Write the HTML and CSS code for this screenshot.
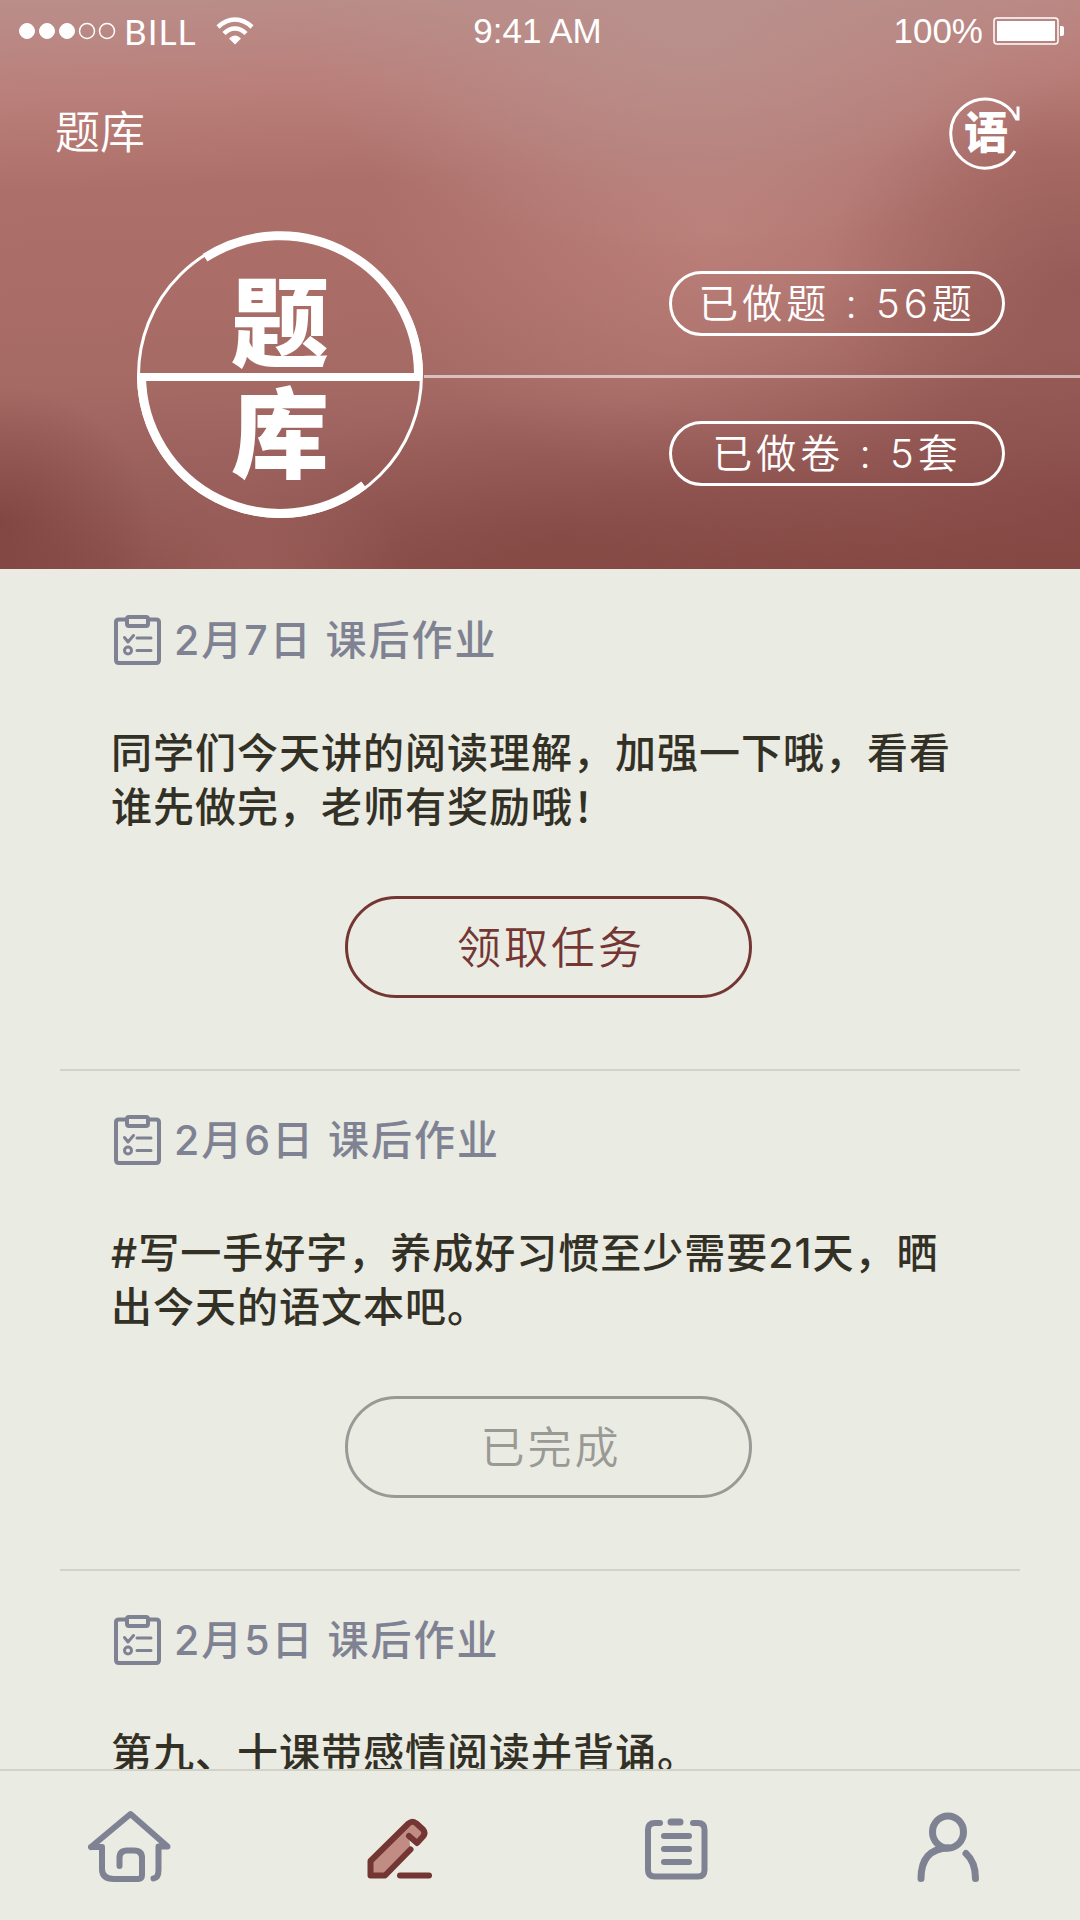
FILE: index.html
```html
<!DOCTYPE html>
<html lang="zh-CN">
<head>
<meta charset="utf-8">
<meta name="viewport" content="width=device-width, initial-scale=1">
<title>题库</title>
<link rel="stylesheet" href="styles.css">
</head>
<body>
<svg class="sprite" aria-hidden="true">
  <symbol id="icon-task" viewBox="0 0 48 50">
    <g fill="none" stroke="currentColor" stroke-linecap="round" stroke-linejoin="round">
      <path stroke-width="4" d="M12 4.500H5Q2 4.500 2 7V45Q2 48 5 48H42Q45 48 45 45V7Q45 4.500 42 4.500H35"/>
      <rect stroke-width="4" x="13" y="2" width="21" height="9" rx="2"/>
      <path stroke-width="3" d="M10.500 22.500L14 27L19.500 20.500M23 23H37M23 35.500H37"/>
      <circle stroke-width="3" cx="14" cy="35.500" r="3.500"/>
    </g>
  </symbol>
</svg>
<header class="hero">
  <div class="status">
    <div class="carrier">
      <svg width="98" height="18" viewBox="0 0 98 18" fill="#fff" stroke="#fff"><circle cx="9" cy="9" r="7.500"/><circle cx="29" cy="9" r="7.500"/><circle cx="49" cy="9" r="7.500"/><g fill="none" stroke-width="1.500"><circle cx="69" cy="9" r="7.500"/><circle cx="89" cy="9" r="7.500"/></g></svg>
      <span class="carrier-name">BILL</span>
      <svg width="38" height="28" viewBox="0 0 38 28" fill="none" stroke="#fff" stroke-width="4.500"><path d="M2 10Q10 2.500 19 2.500T36 10M8 16.500Q13 11.500 19 11.500T30 16.500"/><path fill="#fff" stroke="none" d="M13 21.500Q19 15.500 25 21.500L19 27.500Z"/></svg>
    </div>
    <span class="clock">9:41 AM</span>
    <div class="power">
      <span>100%</span>
      <svg width="72" height="28" viewBox="0 0 72 28" fill="#fff"><rect x="1" y="1" width="64" height="26" rx="3" fill="none" stroke="#fff" stroke-width="1.500"/><rect x="4" y="4" width="58" height="20"/><path d="M67 9h2q2 0 2 2v6q0 2-2 2h-2z"/></svg>
    </div>
  </div>
  <nav class="bar">
    <h1 class="page-title">题库</h1>
    <button class="subject" type="button" aria-label="语文">
      <svg width="74" height="74" viewBox="0 0 74 74"><path d="M69 10.500V23H67.500A34.500 34.500 0 1 0 66 55" fill="none" stroke="#fff" stroke-width="3"/><text class="subject-char" x="37" y="53">语</text></svg>
    </button>
  </nav>
  <div class="summary">
    <svg class="emblem" width="288" height="288" viewBox="0 0 288 288">
      <g fill="none" stroke="#fff">
        <circle cx="144" cy="144" r="141.500" stroke-width="3"/>
        <path stroke-width="9" d="M69 26.800A138.500 138.500 0 0 1 282.500 144M5.500 144A138.500 138.500 0 0 0 228 254"/>
        <path stroke-width="8" d="M4 146H284"/>
      </g>
      <text class="emblem-char" x="144" y="128">题</text>
      <text class="emblem-char" x="144" y="239">库</text>
    </svg>
    <div class="stats">
      <p class="stat">已做题 : 56题</p>
      <hr class="stat-line">
      <p class="stat">已做卷 : 5套</p>
    </div>
  </div>
</header>
<main class="feed">
  <article class="task">
    <h2 class="task-title"><svg class="task-icon" aria-hidden="true"><use href="#icon-task"/></svg>2月7日 课后作业</h2>
    <p class="task-text">同学们今天讲的阅读理解，加强一下哦，看看谁先做完，老师有奖励哦！</p>
    <button class="action" type="button">领取任务</button>
  </article>
  <article class="task">
    <h2 class="task-title"><svg class="task-icon" aria-hidden="true"><use href="#icon-task"/></svg>2月6日 课后作业</h2>
    <p class="task-text">#写一手好字，养成好习惯至少需要21天，晒出今天的语文本吧。</p>
    <button class="action action-done" type="button">已完成</button>
  </article>
  <article class="task">
    <h2 class="task-title"><svg class="task-icon" aria-hidden="true"><use href="#icon-task"/></svg>2月5日 课后作业</h2>
    <p class="task-text">第九、十课带感情阅读并背诵。</p>
  </article>
</main>
<nav class="tabs">
  <a class="tab" href="#home" aria-label="首页"><svg width="84" height="74" viewBox="0 0 84 74"><path d="M3 38H14V60Q14 70 26 70H50Q54 70 54 66V49Q54 41.500 46 41.500H39Q31.500 41.500 31.500 49V57M65.500 69.500Q70.500 69 70.500 61V37.500H79.500L42.500 5L3 38"/></svg></a>
  <a class="tab tab-current" href="#exercises" aria-label="题库"><svg width="84" height="74" viewBox="0 0 84 74"><path d="M48 27L56 34L62 27.500Q65 24 62 20.500L55.500 14.500Q51.500 11 47.500 14.500L9.500 52V66.500H24L49.500 40.500" fill="#c08c84"/><path d="M39 66.500H68"/></svg></a>
  <a class="tab" href="#notes" aria-label="作业"><svg width="84" height="74" viewBox="0 0 84 74"><path d="M27 14H22Q15 14 15 20.500V61Q15 67.500 22 67.500H65Q71.500 67.500 71.500 61V20.500Q71.500 14 65 14H60M31 27H56M31 40H56M31 53H56"/><path stroke-width="7" d="M38 13H47"/></svg></a>
  <a class="tab" href="#profile" aria-label="我的"><svg width="84" height="74" viewBox="0 0 84 74"><g stroke-width="7"><ellipse cx="42" cy="23" rx="15.500" ry="16"/><path d="M42 39C24 39.500 15 50 15 69.500M60 44.500Q69.500 53 69.500 69.500"/></g></svg></a>
</nav>
</body>
</html>
```
FILE: styles.css
```css
* { box-sizing: border-box; }

body {
  margin: 0;
  height: 100vh;
  display: flex;
  flex-direction: column;
  background: #eaebe2;
  color: #333126;
  font-family: Inter, "Noto Sans CJK SC", sans-serif;
  font-size: 41px;
}

h1, h2, p { margin: 0; }
button { font: inherit; background: none; cursor: pointer; }
svg { display: block; flex: none; }
.sprite { position: absolute; width: 0; height: 0; }

/* Header */
.hero {
  flex: none;
  padding-bottom: 50px;
  color: #fff;
  background:
    radial-gradient(ellipse 14% 24% at 0 92%, rgba(118, 58, 54, .6), transparent),
    radial-gradient(ellipse 14% 20% at 24% 100%, rgba(166, 103, 99, .5), transparent),
    radial-gradient(ellipse 32% 24% at 52% 94%, rgba(124, 62, 58, .4), transparent),
    radial-gradient(ellipse 24% 36% at 100% 50%, rgba(140, 82, 78, .6), transparent),
    radial-gradient(ellipse 46% 44% at 100% 88%, rgba(124, 60, 56, .45), transparent),
    radial-gradient(ellipse 36% 40% at 64% 6%, rgba(184, 148, 144, .75), transparent),
    radial-gradient(ellipse 32% 46% at 66% 40%, rgba(196, 136, 130, .65), transparent),
    linear-gradient(178deg, #ba8e8a 0%, #ba7f7a 16%, #ad6f6a 32%, #a66a65 64%, #985e5a 82%, #884c47 100%);
}

.status {
  display: grid;
  grid-template-columns: 1fr auto 1fr;
  align-items: center;
  height: 62px;
  padding: 0 15px 0 18px;
  font-family: "Liberation Sans", Arial, sans-serif;
  font-size: 35px;
  line-height: 40px;
}
.carrier, .power { display: flex; align-items: center; }
.carrier-name { margin: 0 20px 0 8px; font-family: Lato, sans-serif; letter-spacing: 1px; }
.clock { margin-right: 8px; }
.power { justify-content: flex-end; gap: 10px; }

.bar {
  display: flex;
  align-items: center;
  justify-content: space-between;
  height: 142px;
  padding: 0 57px 0 55px;
}
.page-title { font-size: 45px; line-height: 64px; font-weight: 350; }
.subject { padding: 0; border: 0; }
.subject-char, .emblem-char {
  fill: #fff;
  font-family: "Noto Sans CJK SC", sans-serif;
  font-weight: 900;
  text-anchor: middle;
}
.subject-char { font-size: 44px; }
.emblem-char { font-size: 98px; }

.summary { display: flex; padding: 27px 0 0 136px; }
.stats { flex: 1; padding-top: 40px; }
.stat {
  width: 336px;
  height: 65px;
  margin: 0 75px 0 auto;
  border: 3px solid #fff;
  border-radius: 33px;
  font-size: 40px;
  font-weight: 350;
  line-height: 59px;
  letter-spacing: 4px;
  text-align: center;
  white-space: nowrap;
}
.stat-line { height: 3px; margin: 39px 0 43px; border: 0; background: rgba(255, 255, 255, .58); }

/* Homework feed */
.feed {
  flex: 1;
  min-height: 0;
  padding: 0 60px;
  overflow-y: auto;
  scrollbar-width: none;
}
.task {
  height: 500px;
  padding: 44px 34px 0 51px;
  border-top: 2px solid #d1d2cb;
}
.task:first-child { border-color: transparent; }
.task-title {
  display: flex;
  align-items: flex-start;
  gap: 12px;
  height: 50px;
  padding-left: 3px;
  color: #7f8293;
  font-size: 41px;
  font-weight: 500;
  line-height: 50px;
  letter-spacing: 2px;
}
.task-icon { width: 48px; height: 50px; }
.task-text { padding: 61px 30px 0 0; font-weight: 500; line-height: 54px; letter-spacing: 1px; }
.action {
  display: block;
  width: 407px;
  height: 102px;
  margin: 62px auto 0;
  padding: 0 0 4px 5px;
  border: 3px solid #743633;
  border-radius: 51px;
  color: #743633;
  font-size: 44px;
  font-weight: 350;
  letter-spacing: 3px;
}
.action-done { border-color: #999a96; color: #999a96; }

/* Tab bar */
.tabs {
  flex: none;
  display: flex;
  align-items: center;
  justify-content: space-between;
  height: 151px;
  padding: 0 90px 0 88px;
  border-top: 2px solid #d1d2c8;
  background: #eaebe2;
}
.tab { color: #7f8293; }
.tab svg {
  fill: none;
  stroke: currentColor;
  stroke-width: 6;
  stroke-linecap: round;
  stroke-linejoin: round;
}
.tab-current { color: #743633; }
```
